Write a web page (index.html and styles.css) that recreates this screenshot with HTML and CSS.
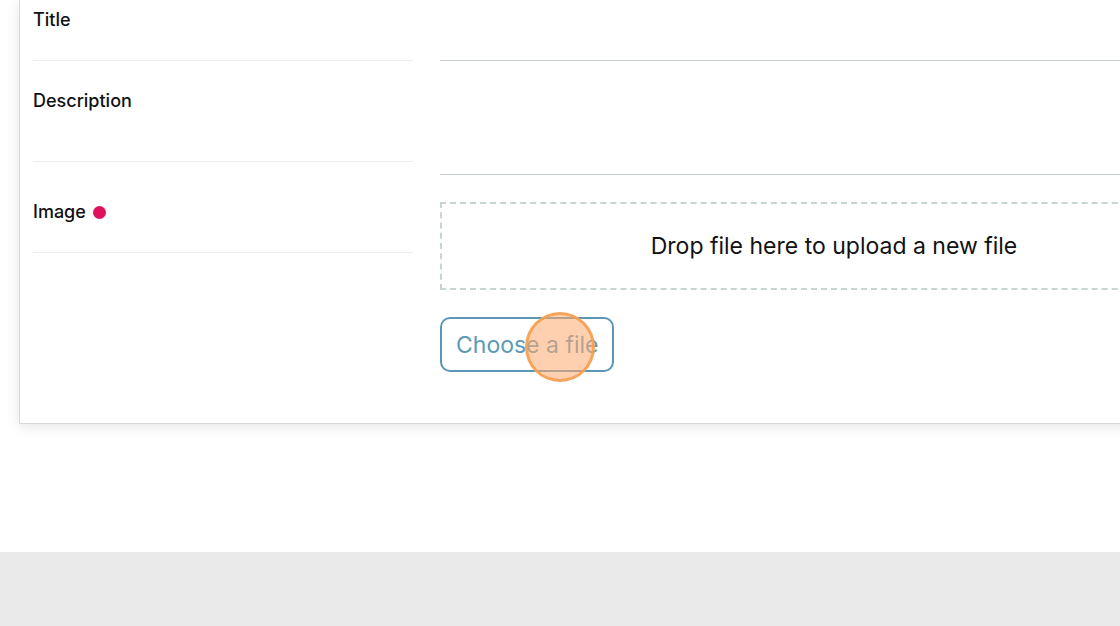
FILE: index.html
```html
<!DOCTYPE html>
<html lang="en">
<head>
<meta charset="utf-8">
<title>Upload form</title>
<link rel="stylesheet" href="styles.css">
</head>
<body>
<div class="page">
  <div class="card">
    <div class="form-row row-title">
      <div class="label-cell"><span class="label">Title</span></div>
      <div class="field-cell"><div class="input"></div></div>
    </div>
    <div class="form-row row-desc">
      <div class="label-cell"><span class="label">Description</span></div>
      <div class="field-cell"><div class="textarea"></div></div>
    </div>
    <div class="form-row row-image">
      <div class="label-cell"><span class="label">Image</span><span class="required-dot"></span></div>
      <div class="field-cell">
        <div class="dropzone">Drop file here to upload a new file</div>
        <div class="button-wrap">
          <button class="choose-btn">Choose a file</button>
          <span class="click-marker"></span>
        </div>
      </div>
    </div>
  </div>
</div>
<footer class="footer"></footer>
</body>
</html>
```
FILE: styles.css
```css
html, body {
  margin: 0;
  padding: 0;
  background: #ffffff;
  overflow: hidden;
  font-family: Inter, "Noto Sans", "Liberation Sans", sans-serif;
  color: #111111;
}

.page {
  height: 552px;
  padding-left: 19px;
  box-sizing: border-box;
  overflow: hidden;
}

.card {
  width: 1300px;
  background: #ffffff;
  border-left: 1px solid #d6dada;
  border-bottom: 1px solid #d3d7d8;
  box-shadow: 0 3px 12px rgba(0, 0, 0, 0.10);
  padding-left: 13px;
  padding-bottom: 51px;
  box-sizing: border-box;
}

.form-row {
  display: grid;
  grid-template-columns: 380px 788px;
  column-gap: 27px;
  align-items: start;
}

.label-cell {
  display: flex;
  align-items: center;
  gap: 7px;
  border-bottom: 1px solid #e9eeee;
  line-height: 24px;
}

.label {
  font-size: 18px;
  font-weight: 500;
  color: #111;
}

.required-dot {
  width: 13px;
  height: 13px;
  border-radius: 50%;
  background: #e0105e;
}

.row-title .label-cell { padding: 8px 0 28px; }
.row-desc .label-cell { padding: 28px 0 48px; }
.row-image .label-cell { padding: 25px 0 28px; }

.input {
  height: 60px;
  border-bottom: 1px solid #c6cdcf;
}

.textarea {
  height: 113px;
  border-bottom: 1px solid #c6cdcf;
}

.dropzone {
  margin-top: 27px;
  height: 88px;
  box-sizing: border-box;
  border: 2px dashed #c6d5d3;
  display: flex;
  align-items: center;
  justify-content: center;
  font-size: 23px;
  color: #111;
}

.button-wrap {
  position: relative;
  margin-top: 27px;
  width: 174px;
}

.choose-btn {
  display: block;
  width: 174px;
  height: 55px;
  box-sizing: border-box;
  border: 2.5px solid #5b97b6;
  border-radius: 10px;
  background: #ffffff;
  color: #5d99b7;
  font-family: Inter, "Noto Sans", "Liberation Sans", sans-serif;
  font-size: 23px;
  padding: 0 0 0 14px;
  text-align: left;
}

.click-marker {
  position: absolute;
  left: 85px;
  top: -5px;
  width: 70px;
  height: 70px;
  box-sizing: border-box;
  border-radius: 50%;
  border: 3px solid rgba(245, 160, 80, 0.9);
  background: rgba(255, 170, 110, 0.55);
}

.footer {
  height: 74px;
  background: #eaeaea;
}
```
